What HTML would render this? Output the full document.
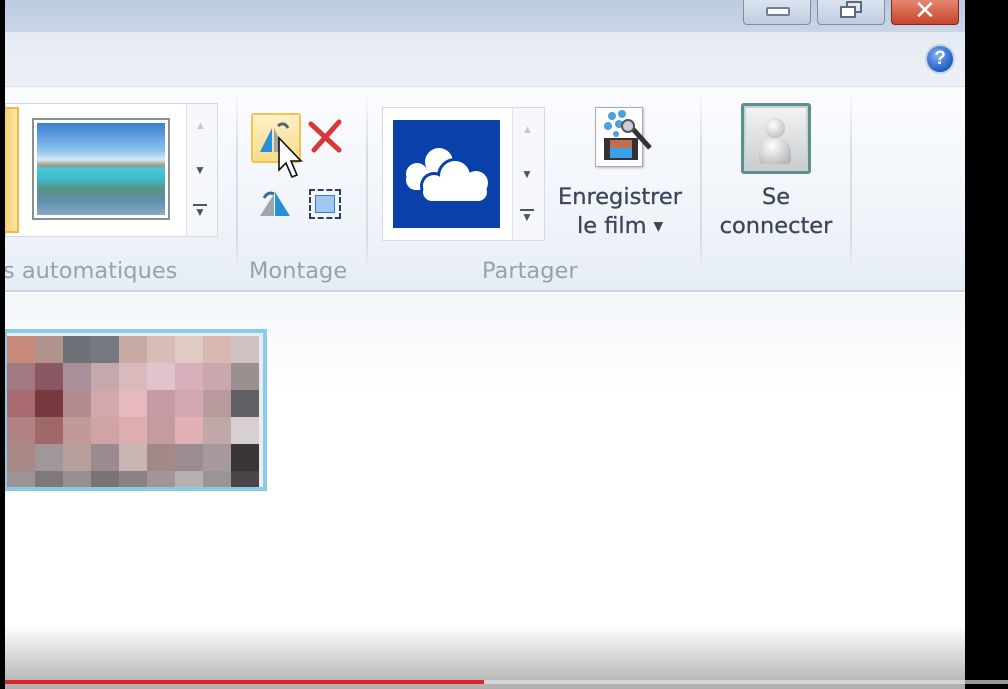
<!DOCTYPE html>
<html><head><meta charset="utf-8">
<style>
*{margin:0;padding:0;box-sizing:border-box}
body{width:1008px;height:689px;overflow:hidden;position:relative;background:#fff;font-family:"Liberation Sans","DejaVu Sans",sans-serif}
.a{position:absolute}
.lbl{position:absolute;color:#98a1ad;font-size:22.5px;font-family:"DejaVu Sans","Liberation Sans",sans-serif;line-height:26px}
.txt{position:absolute;color:#3a4659;font-size:22.5px;font-family:"DejaVu Sans","Liberation Sans",sans-serif;text-align:center;line-height:29px;-webkit-text-stroke:0.3px #3a4659}
.sep{position:absolute;width:2px;background:linear-gradient(#f4f7fb,#d5dde8 30%,#d5dde8 80%,#eef2f7);}
.wb{position:absolute;top:-4px;height:29px;width:68px;border:1px solid #7d8ea5;border-radius:4px;background:linear-gradient(#dfe7f1,#c0cde0)}
</style></head><body>
<!-- title bar -->
<div class="a" style="left:0;top:0;width:965px;height:32px;background:linear-gradient(#bccbe0,#cad6e6)"></div>
<div class="wb" style="left:743px"><div class="a" style="left:22px;top:10px;width:24px;height:9px;border:2px solid #6f7f95;background:#fff;border-radius:2px"></div></div>
<div class="wb" style="left:817px"><div class="a" style="left:28px;top:4px;width:16px;height:12px;border:2px solid #5c6b80;background:#dfe6ef"></div><div class="a" style="left:22px;top:9px;width:16px;height:12px;border:2px solid #5c6b80;background:#fff"></div></div>
<div class="wb" style="left:891px;background:linear-gradient(#e8907a,#c8432a);border-color:#7a2a1e"><div class="a" style="left:22px;top:-2px;color:#fff;font-size:26px;font-weight:bold">✕</div></div>
<!-- second bar -->
<div class="a" style="left:0;top:32px;width:965px;height:55px;background:linear-gradient(#e5ebf3,#edf1f7)"></div>
<div class="a" style="left:925px;top:44px;width:30px;height:30px;border-radius:50%;background:radial-gradient(circle at 40% 35%,#7fb0f0,#1f5fc4 70%);border:2px solid #c4d4ea;color:#fff;font-weight:bold;font-size:19px;text-align:center;line-height:26px">?</div>
<!-- ribbon -->
<div class="a" style="left:0;top:86px;width:965px;height:206px;background:linear-gradient(#fbfcfe,#f1f5fa 60%,#e6edf5);border-top:1px solid #d8dfe8;border-bottom:2px solid #c9d2de"></div>
<!-- gallery left -->
<div class="a" style="left:5px;top:103px;width:213px;height:134px;border:1px solid #d3dae3;background:#fff"></div>
<div class="a" style="left:5px;top:107px;width:14px;height:126px;background:linear-gradient(90deg,#f6cf70,#fbe6a8);border:2px solid #f0b845;border-left:none"></div>
<div class="a" style="left:32px;top:118px;width:138px;height:102px;border:2px solid #8a8f96;padding:3px;background:#fff">
<div style="width:100%;height:100%;background:linear-gradient(#3a7fd0 0%,#8fc3ee 30%,#d6e8f0 40%,#9a9a8a 46%,#45c8d8 50%,#40b8c8 62%,#5a9080 72%,#6090b0 85%,#8aa8c8 100%)"></div></div>
<div class="a" style="left:186px;top:104px;width:31px;height:132px;background:#f6f8fb;border-left:1px solid #e0e5ec"></div>
<div class="a" style="left:195px;top:120px;color:#c2c8d0;font-size:11px">▲</div>
<div class="a" style="left:194px;top:163px;color:#4a5568;font-size:12px">▼</div>
<div class="a" style="left:193px;top:204px;width:14px;height:2px;background:#4a5568"></div>
<div class="a" style="left:194px;top:205px;color:#4a5568;font-size:12px">▼</div>
<div class="lbl" style="left:3px;top:258px">s automatiques</div>
<div class="sep" style="left:236px;top:98px;height:178px"></div>
<!-- montage -->
<div class="a" style="left:251px;top:113px;width:50px;height:50px;border:2px solid #f2c44e;border-radius:3px;background:linear-gradient(#fdf0c6,#f8dc8a)"></div>
<svg class="a" style="left:256px;top:118px" width="42" height="42"><polygon points="4,34 16,10 16,34" fill="#2b8fd8"/><polygon points="18,10 30,34 18,34" fill="#9aa6b0"/><path d="M22 8 q6-5 10 2" stroke="#567" stroke-width="3" fill="none"/></svg>
<svg class="a" style="left:306px;top:118px" width="40" height="36"><path d="M5 6 L33 32 M33 4 L8 32" stroke="#d8383a" stroke-width="5" stroke-linecap="round"/></svg>
<svg class="a" style="left:256px;top:186px" width="42" height="34"><polygon points="4,30 18,8 18,30" fill="#9aa6b0"/><polygon points="19,6 34,30 19,30" fill="#2b8fd8"/><path d="M8 12 q4-7 10-4" stroke="#3a6a90" stroke-width="3" fill="none"/></svg>
<div class="a" style="left:309px;top:189px;width:32px;height:30px;border:2px dashed #2a3d66"></div>
<div class="a" style="left:315px;top:195px;width:20px;height:18px;background:#9cc8f2;border:1px solid #3a7ad0"></div>
<svg class="a" style="left:276px;top:136px" width="30" height="48"><path d="M3 2 L3 34 L10 27 L16 41 L21 39 L15 25 L25 25 Z" fill="#fff" stroke="#111" stroke-width="1.6"/></svg>
<div class="lbl" style="left:249px;top:258px">Montage</div>
<div class="sep" style="left:366px;top:98px;height:178px"></div>
<!-- partager -->
<div class="a" style="left:382px;top:107px;width:163px;height:134px;border:1px solid #d3dae3;background:#fff"></div>
<svg class="a" style="left:393px;top:120px" width="107" height="108"><rect width="107" height="108" fill="#0a40aa"/>
<g fill="#fff"><circle cx="46" cy="42" r="14"/><circle cx="24" cy="54" r="11"/><circle cx="62" cy="50" r="9"/><rect x="13" y="50" width="58" height="20" rx="10"/></g>
<g fill="#0a40aa"><circle cx="62" cy="56" r="18"/><circle cx="41" cy="66" r="14"/><circle cx="83" cy="63" r="15"/><rect x="27" y="60" width="70" height="24" rx="12"/></g>
<g fill="#fff"><circle cx="62" cy="56" r="15"/><circle cx="41" cy="66" r="11"/><circle cx="83" cy="63" r="12"/><rect x="30" y="63" width="64" height="18" rx="9"/></g></svg>
<div class="a" style="left:512px;top:108px;width:32px;height:132px;background:#f6f8fb;border-left:1px solid #e0e5ec"></div>
<div class="a" style="left:522px;top:124px;color:#c2c8d0;font-size:11px">▲</div>
<div class="a" style="left:521px;top:167px;color:#4a5568;font-size:12px">▼</div>
<div class="a" style="left:520px;top:209px;width:14px;height:2px;background:#4a5568"></div>
<div class="a" style="left:521px;top:210px;color:#4a5568;font-size:12px">▼</div>
<div class="lbl" style="left:482px;top:258px">Partager</div>
<!-- enregistrer -->
<div class="a" style="left:595px;top:107px;width:48px;height:60px;background:#fff;border:1px solid #aab;box-shadow:1px 1px 2px #bbb"></div>
<svg class="a" style="left:598px;top:108px" width="60" height="58"><g fill="#4aa0e0"><circle cx="14" cy="8" r="4"/><circle cx="24" cy="6" r="4"/><circle cx="10" cy="18" r="4"/><circle cx="21" cy="16" r="4"/><circle cx="30" cy="14" r="3"/><circle cx="18" cy="26" r="3"/></g><rect x="6" y="30" width="34" height="22" fill="#333"/><rect x="12" y="32" width="22" height="18" fill="#3aa0e8"/><rect x="12" y="32" width="22" height="8" fill="#c07050"/><path d="M34 20 L52 40" stroke="#333" stroke-width="5"/><circle cx="30" cy="18" r="6" fill="#ccd" stroke="#555" stroke-width="2"/></svg>
<div class="txt" style="left:545px;top:183px;width:150px">Enregistrer<br>le film <span style="font-size:12px;vertical-align:3px">▼</span></div>
<div class="sep" style="left:700px;top:98px;height:178px"></div>
<!-- se connecter -->
<div class="a" style="left:741px;top:103px;width:70px;height:71px;border:3px solid #5f8f8c;border-radius:3px;background:linear-gradient(#f4f4f4,#c9ccce);box-shadow:inset 0 0 0 2px #c8d2d8"></div>
<div class="a" style="left:765px;top:118px;width:20px;height:20px;border-radius:50%;background:radial-gradient(circle at 40% 35%,#fff,#a9adb0)"></div>
<div class="a" style="left:759px;top:138px;width:32px;height:26px;border-radius:14px 14px 4px 4px;background:radial-gradient(circle at 40% 30%,#fff,#a5a9ad)"></div>
<div class="txt" style="left:701px;top:183px;width:150px">Se<br>connecter</div>
<div class="sep" style="left:850px;top:98px;height:178px"></div>
<!-- content -->
<div class="a" style="left:0;top:293px;width:965px;height:396px;background:linear-gradient(#f3f6fa,#fff 25%,#fff)"></div>
<div class="a" style="left:3px;top:329px;width:264px;height:162px;border:4px solid #8ccbe6;background:#e6eef2;overflow:hidden">
<div style="display:grid;grid-template-columns:repeat(9,28px);grid-auto-rows:27px;margin-top:3px">
<div style="background:#c88a7a"></div><div style="background:#b0948c"></div><div style="background:#6d7278"></div><div style="background:#767a80"></div><div style="background:#c8aaa4"></div><div style="background:#d8bdb6"></div><div style="background:#e0cac4"></div><div style="background:#d8b8b0"></div><div style="background:#cfc2c0"></div>
<div style="background:#a07a80"></div><div style="background:#8a5860"></div><div style="background:#a8909a"></div><div style="background:#c4a8ac"></div><div style="background:#d9b9bc"></div><div style="background:#e2c2cc"></div><div style="background:#d8b0bc"></div><div style="background:#c8a8ac"></div><div style="background:#9a9090"></div>
<div style="background:#a86c70"></div><div style="background:#7a3840"></div><div style="background:#b08c90"></div><div style="background:#d2a8ac"></div><div style="background:#e8b8c0"></div><div style="background:#c89aa4"></div><div style="background:#d4a8b0"></div><div style="background:#b89a9c"></div><div style="background:#606064"></div>
<div style="background:#b08284"></div><div style="background:#a06868"></div><div style="background:#c09a98"></div><div style="background:#d0a4a4"></div><div style="background:#dcaeb0"></div><div style="background:#c49ca0"></div><div style="background:#e0b0b4"></div><div style="background:#c0a8a8"></div><div style="background:#d8d0d0"></div>
<div style="background:#aa8886"></div><div style="background:#a09898"></div><div style="background:#b89e9c"></div><div style="background:#9a8c8e"></div><div style="background:#c8b4b2"></div><div style="background:#a48888"></div><div style="background:#9a8c90"></div><div style="background:#a89a9c"></div><div style="background:#383438"></div>
<div style="background:#9a9494"></div><div style="background:#7e7a7c"></div><div style="background:#989090"></div><div style="background:#7a7274"></div><div style="background:#8a8284"></div><div style="background:#a09698"></div><div style="background:#b8b0b0"></div><div style="background:#9a9496"></div><div style="background:#4a4448"></div>
</div></div>
<!-- bottom overlay -->
<div class="a" style="left:0;top:625px;width:965px;height:64px;background:linear-gradient(rgba(255,255,255,0),rgba(170,170,170,0.95))"></div>
<div class="a" style="left:0;top:680px;width:965px;height:4px;background:#d6d6d6"></div>
<div class="a" style="left:965px;top:680px;width:43px;height:4px;background:#999"></div>
<div class="a" style="left:0;top:680px;width:484px;height:4px;background:#e0222a"></div>
<!-- black bars -->
<div class="a" style="left:0;top:0;width:5px;height:689px;background:#000"></div>
<div class="a" style="left:965px;top:0;width:43px;height:680px;background:#000"></div>
<div class="a" style="left:965px;top:684px;width:43px;height:5px;background:#000"></div>
</body></html>
